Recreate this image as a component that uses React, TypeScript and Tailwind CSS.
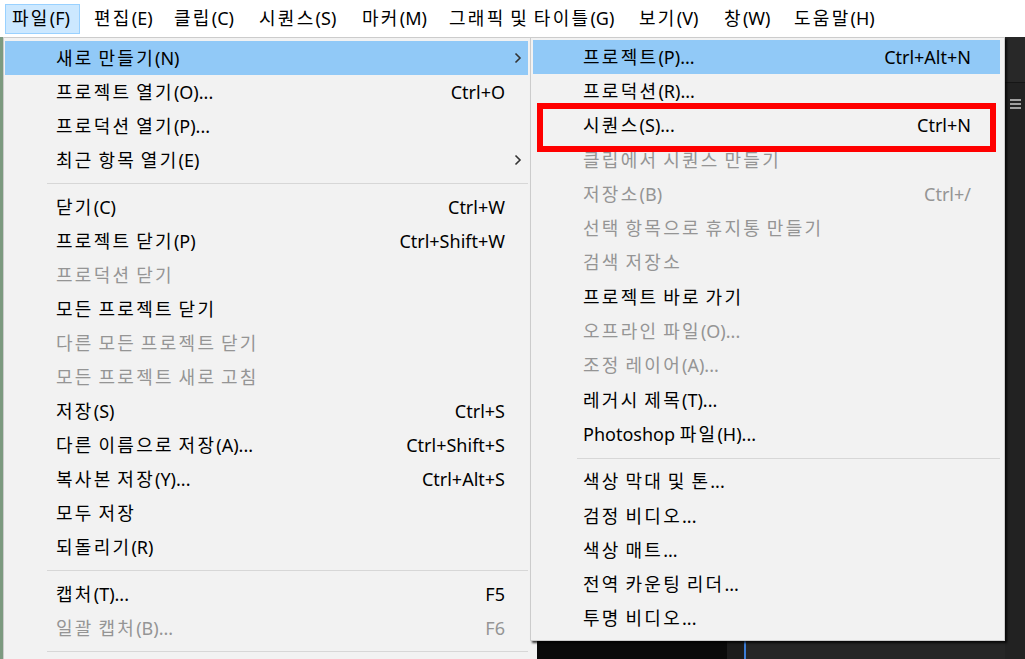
type Item = { label: string; shortcut?: string; arrow?: boolean; disabled?: boolean; active?: boolean } | "sep";

const menuBar = [
  { label: "파일(F)", w: 82, active: true },
  { label: "편집(E)", w: 80 },
  { label: "클립(C)", w: 85 },
  { label: "시퀀스(S)", w: 103 },
  { label: "마커(M)", w: 87 },
  { label: "그래픽 및 타이틀(G)", w: 190 },
  { label: "보기(V)", w: 85 },
  { label: "창(W)", w: 70 },
  { label: "도움말(H)", w: 90 },
];

const fileMenu: Item[] = [
  { label: "새로 만들기(N)", arrow: true, active: true },
  { label: "프로젝트 열기(O)...", shortcut: "Ctrl+O" },
  { label: "프로덕션 열기(P)..." },
  { label: "최근 항목 열기(E)", arrow: true },
  "sep",
  { label: "닫기(C)", shortcut: "Ctrl+W" },
  { label: "프로젝트 닫기(P)", shortcut: "Ctrl+Shift+W" },
  { label: "프로덕션 닫기", disabled: true },
  { label: "모든 프로젝트 닫기" },
  { label: "다른 모든 프로젝트 닫기", disabled: true },
  { label: "모든 프로젝트 새로 고침", disabled: true },
  { label: "저장(S)", shortcut: "Ctrl+S" },
  { label: "다른 이름으로 저장(A)...", shortcut: "Ctrl+Shift+S" },
  { label: "복사본 저장(Y)...", shortcut: "Ctrl+Alt+S" },
  { label: "모두 저장" },
  { label: "되돌리기(R)" },
  "sep",
  { label: "캡처(T)...", shortcut: "F5" },
  { label: "일괄 캡처(B)...", shortcut: "F6", disabled: true },
  "sep",
];

const newMenu: Item[] = [
  { label: "프로젝트(P)...", shortcut: "Ctrl+Alt+N", active: true },
  { label: "프로덕션(R)..." },
  { label: "시퀀스(S)...", shortcut: "Ctrl+N" },
  { label: "클립에서 시퀀스 만들기", disabled: true },
  { label: "저장소(B)", shortcut: "Ctrl+/", disabled: true },
  { label: "선택 항목으로 휴지통 만들기", disabled: true },
  { label: "검색 저장소", disabled: true },
  { label: "프로젝트 바로 가기" },
  { label: "오프라인 파일(O)...", disabled: true },
  { label: "조정 레이어(A)...", disabled: true },
  { label: "레거시 제목(T)..." },
  { label: "Photoshop 파일(H)..." },
  "sep",
  { label: "색상 막대 및 톤..." },
  { label: "검정 비디오..." },
  { label: "색상 매트..." },
  { label: "전역 카운팅 리더..." },
  { label: "투명 비디오..." },
];

// hangul in the original font runs wider, so space those runs out a little
const Txt = ({ text }: { text: string }) => (
  <span>
    {text.split(/([\uAC00-\uD7A3]+)/).map((p, i) =>
      /[\uAC00-\uD7A3]/.test(p) ? (
        <span key={i} className="tracking-[2.3px]">
          {p}
        </span>
      ) : (
        <span key={i}>{p}</span>
      )
    )}
  </span>
);

const Chevron = () => (
  <svg width="8" height="12" viewBox="0 0 8 12" fill="none">
    <polyline points="1.5,1.5 6,6 1.5,10.5" stroke="#333" strokeWidth="1.6" />
  </svg>
);

const App = () => {
  return (
    <div className="w-[1025px] h-[659px] overflow-hidden bg-[#232323] flex flex-col font-[family-name:Noto_Sans,Noto_Sans_CJK_KR,sans-serif] text-[18px] text-black">
      {/* menu bar */}
      <div className="h-[37px] bg-white flex items-center pl-[5px]">
        {menuBar.map((m) => (
          <div key={m.label} className="flex items-center" style={{ width: m.w }}>
            <span
              className={
                m.active
                  ? "h-[30px] pl-[6px] pr-[9px] flex items-center bg-[#cce8ff] border border-[#99d1ff] whitespace-nowrap"
                  : "h-[30px] pl-[6px] pr-[9px] flex items-center border border-transparent whitespace-nowrap"
              }
            >
              <Txt text={m.label} />
            </span>
          </div>
        ))}
      </div>

      <div className="flex-1 flex min-h-0">
        <div className="w-[3px] bg-[#7c9a80]" />

        {/* file menu */}
        <div className="w-[527px] bg-[#f2f2f2] border-l border-t border-[#cccccc] pt-[3px] pl-px pr-[2px] overflow-hidden">
          {fileMenu.map((it, i) =>
            it === "sep" ? (
              <div key={i} className="h-[13px] flex items-center pl-[42px]">
                <div className="h-px w-full bg-[#d7d7d7]" />
              </div>
            ) : (
              <div
                key={i}
                className={
                  it.active
                    ? "h-[34px] flex items-center pl-[51px] bg-[#91c9f7] whitespace-nowrap"
                    : "h-[34px] flex items-center pl-[51px] whitespace-nowrap"
                }
              >
                <span className={it.disabled ? "flex-1 text-[#959595]" : "flex-1"}>
                  <Txt text={it.label} />
                </span>
                {it.shortcut && <span className={it.disabled ? "text-[#959595]" : ""}>{it.shortcut}</span>}
                <span className="w-[23px] flex items-center pl-[9px]">{it.arrow && <Chevron />}</span>
              </div>
            )
          )}
        </div>

        {/* new submenu + app below */}
        <div className="w-[475px] flex flex-col">
          <div className="relative z-10 bg-[#f2f2f2] border border-[#cccccc] pt-[2px] pb-[4px] pl-[2px] pr-[4px] shadow-[2px_2px_2px_rgba(0,0,0,0.75)]">
            {newMenu.map((it, i) =>
              it === "sep" ? (
                <div key={i} className="h-[13px] flex items-center pl-[44px]">
                  <div className="h-px w-full bg-[#d7d7d7]" />
                </div>
              ) : (
                <div
                  key={i}
                  className={
                    it.active
                      ? "h-[34.3px] flex items-center pl-[50px] pr-[29px] bg-[#91c9f7] whitespace-nowrap"
                      : "h-[34.3px] flex items-center pl-[50px] pr-[29px] whitespace-nowrap"
                  }
                >
                  <span className={it.disabled ? "flex-1 text-[#959595]" : "flex-1"}>
                    <Txt text={it.label} />
                  </span>
                  {it.shortcut && <span className={it.disabled ? "text-[#959595]" : ""}>{it.shortcut}</span>}
                </div>
              )
            )}
            {/* annotation box */}
            <div className="absolute left-[6px] top-[65px] w-[459px] h-[49px] border-[6px] border-[#ff0000]" />
          </div>
          <div className="flex-1 flex">
            <div className="w-[7px] bg-[#f2f2f2]" />
            <div className="w-[190px] bg-[#0a0a0a]" />
            <div className="w-[17px] bg-[#1c1c1c]" />
            <div className="w-[2px] bg-[#3b7dd8]" />
            <div className="flex-1 bg-[#262626]" />
          </div>
        </div>

        {/* right app strip */}
        <div className="flex-1 flex flex-col">
          <div className="h-[46px] bg-[#282828] border-b border-[#161616]" />
          <div className="flex-1 bg-[#222222] pl-[5px] pt-[16px]">
            <div className="w-[11px] flex flex-col gap-[2px]">
              <div className="h-[2px] bg-[#a0a0a0]" />
              <div className="h-[2px] bg-[#a0a0a0]" />
              <div className="h-[2px] bg-[#a0a0a0]" />
            </div>
          </div>
        </div>
      </div>
    </div>
  );
};

export default App;
